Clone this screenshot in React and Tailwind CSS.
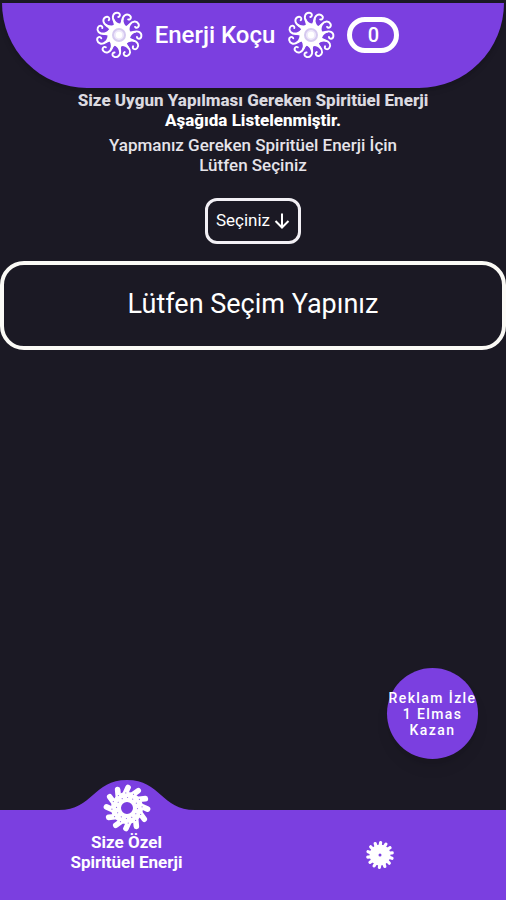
import React, { useState } from 'react';

const CURLS = Array.from({ length: 11 }, (_, i) => (i * 360) / 11);
const TEETH = Array.from({ length: 12 }, (_, i) => i * 30);
const PETALS = Array.from({ length: 14 }, (_, i) => (i * 360) / 14);

function SunIcon() {
    return (
        <svg viewBox="-24 -24 48 48" className="h-12 w-12 shrink-0" aria-hidden="true">
            <circle r="11.5" fill="#fff" />
            {CURLS.map((angle) => (
                <g key={angle} transform={`rotate(${angle - 6})`}>
                    <path d="M-4 -10 Q-4.4 -13 -4.6 -17 L-3.2 -17 Q-2.4 -13 3 -10.5 Z" fill="#fff" />
                    <path
                        d="M-3.6 -14 C-5.6 -19.5 -3 -22.6 0.2 -22.4 C3.6 -22.2 3.8 -18.2 1.2 -18"
                        fill="none"
                        stroke="#fff"
                        strokeWidth="1.9"
                        strokeLinecap="round"
                    />
                </g>
            ))}
            <circle r="6" fill="#eee8fa" stroke="#d5c9ef" strokeWidth="2" />
            <circle r="3.2" fill="#fff" />
        </svg>
    );
}

function WheelIcon() {
    return (
        <svg viewBox="-24 -24 48 48" className="h-12 w-12" aria-hidden="true">
            <circle r="11" fill="none" stroke="#fff" strokeWidth="10" />
            {TEETH.map((angle) => (
                <g key={angle} transform={`rotate(${angle + 3})`}>
                    <path d="M-3 -13 L0 -20.6" stroke="#fff" strokeWidth="5.6" strokeLinecap="round" />
                    <circle cx="0" cy="-10.5" r="0.6" fill="#9a70e8" />
                    <circle cx="-2" cy="-15" r="0.6" fill="#9a70e8" />
                </g>
            ))}
        </svg>
    );
}

function BurstIcon() {
    return (
        <svg viewBox="-14 -14 28 28" className="h-7 w-7" aria-hidden="true">
            <circle r="6" fill="none" stroke="#fff" strokeWidth="9" />
            {PETALS.map((angle) => (
                <path
                    key={angle}
                    d="M0 -8 L0.6 -12.4"
                    stroke="#fff"
                    strokeWidth="3.2"
                    strokeLinecap="round"
                    transform={`rotate(${angle})`}
                />
            ))}
        </svg>
    );
}

function Header({ gems }) {
    return (
        <header className="mx-0.5 flex h-[85px] justify-center rounded-b-[85px] bg-[#7b3fe0] shadow-md">
            <div className="flex h-16 items-center gap-3 pr-3">
                <SunIcon />
                <h1 className="text-2xl font-medium">Enerji Koçu</h1>
                <SunIcon />
                <button className="h-9 w-[52px] rounded-full border-[5px] border-white text-xl leading-none font-medium">
                    {gems}
                </button>
            </div>
        </header>
    );
}

function BottomNav() {
    return (
        <nav className="grid h-[90px] grid-cols-2 bg-[#7b3fe0]">
            <a href="#ozel" className="relative flex flex-col items-center justify-start">
                <svg viewBox="0 0 136 32" className="absolute bottom-full h-8 w-[136px] translate-y-px" aria-hidden="true">
                    <path d="M0 32 V31 C34 31 34 1 68 1 C102 1 102 31 136 31 V32 Z" fill="#7b3fe0" />
                </svg>
                <span className="relative -mt-[26px]">
                    <WheelIcon />
                </span>
                <span className="text-center text-[17px] leading-5 font-bold">
                    Size Özel
                    <br />
                    Spiritüel Enerji
                </span>
            </a>
            <a href="#enerji" aria-label="Enerji" className="flex items-center justify-center">
                <BurstIcon />
            </a>
        </nav>
    );
}

function App() {
    const [isOpen, setIsOpen] = useState(false);

    return (
        <div className="flex min-h-screen flex-col bg-[#1b1924] pt-[3px] font-['Roboto',sans-serif] text-white">
            <Header gems={0} />

            <main className="flex flex-1 flex-col items-center">
                <h2 className="mt-0.5 text-center text-[17px] leading-5 font-extrabold">
                    <span className="text-[#dcdae0]">Size Uygun Yapılması Gereken Spiritüel Enerji</span>
                    <br />
                    Aşağıda Listelenmiştir.
                </h2>
                <p className="mt-[5px] text-center text-[17px] leading-5 font-medium text-[#e6e4ea]">
                    Yapmanız Gereken Spiritüel Enerji İçin
                    <br />
                    Lütfen Seçiniz
                </p>

                <button
                    onClick={() => setIsOpen(!isOpen)}
                    aria-expanded={isOpen}
                    className="mt-[23px] flex h-[46px] items-center gap-1 rounded-xl border-3 border-[#f2f0f5] px-2 text-[17px]"
                >
                    Seçiniz
                    <svg viewBox="0 0 16 16" className="h-4 w-4" fill="none" stroke="currentColor" strokeWidth="2" aria-hidden="true">
                        <path d="M8 0.5 V14 M1.5 8 L8 14.5 L14.5 8" />
                    </svg>
                </button>

                <div className="mt-[17px] flex h-[89px] w-full items-center justify-center rounded-3xl border-4 border-[#fbfaf6] pb-0.5 text-[27px]">
                    Lütfen Seçim Yapınız
                </div>

                <button className="mt-auto mr-7 mb-[51px] flex h-[91px] w-[91px] items-center justify-center self-end rounded-full bg-[#7b3fe0] text-center text-sm leading-4 font-medium tracking-widest whitespace-nowrap shadow-lg">
                    Reklam İzle
                    <br />
                    1 Elmas
                    <br />
                    Kazan
                </button>
            </main>

            <BottomNav />
        </div>
    );
}

export default App;
